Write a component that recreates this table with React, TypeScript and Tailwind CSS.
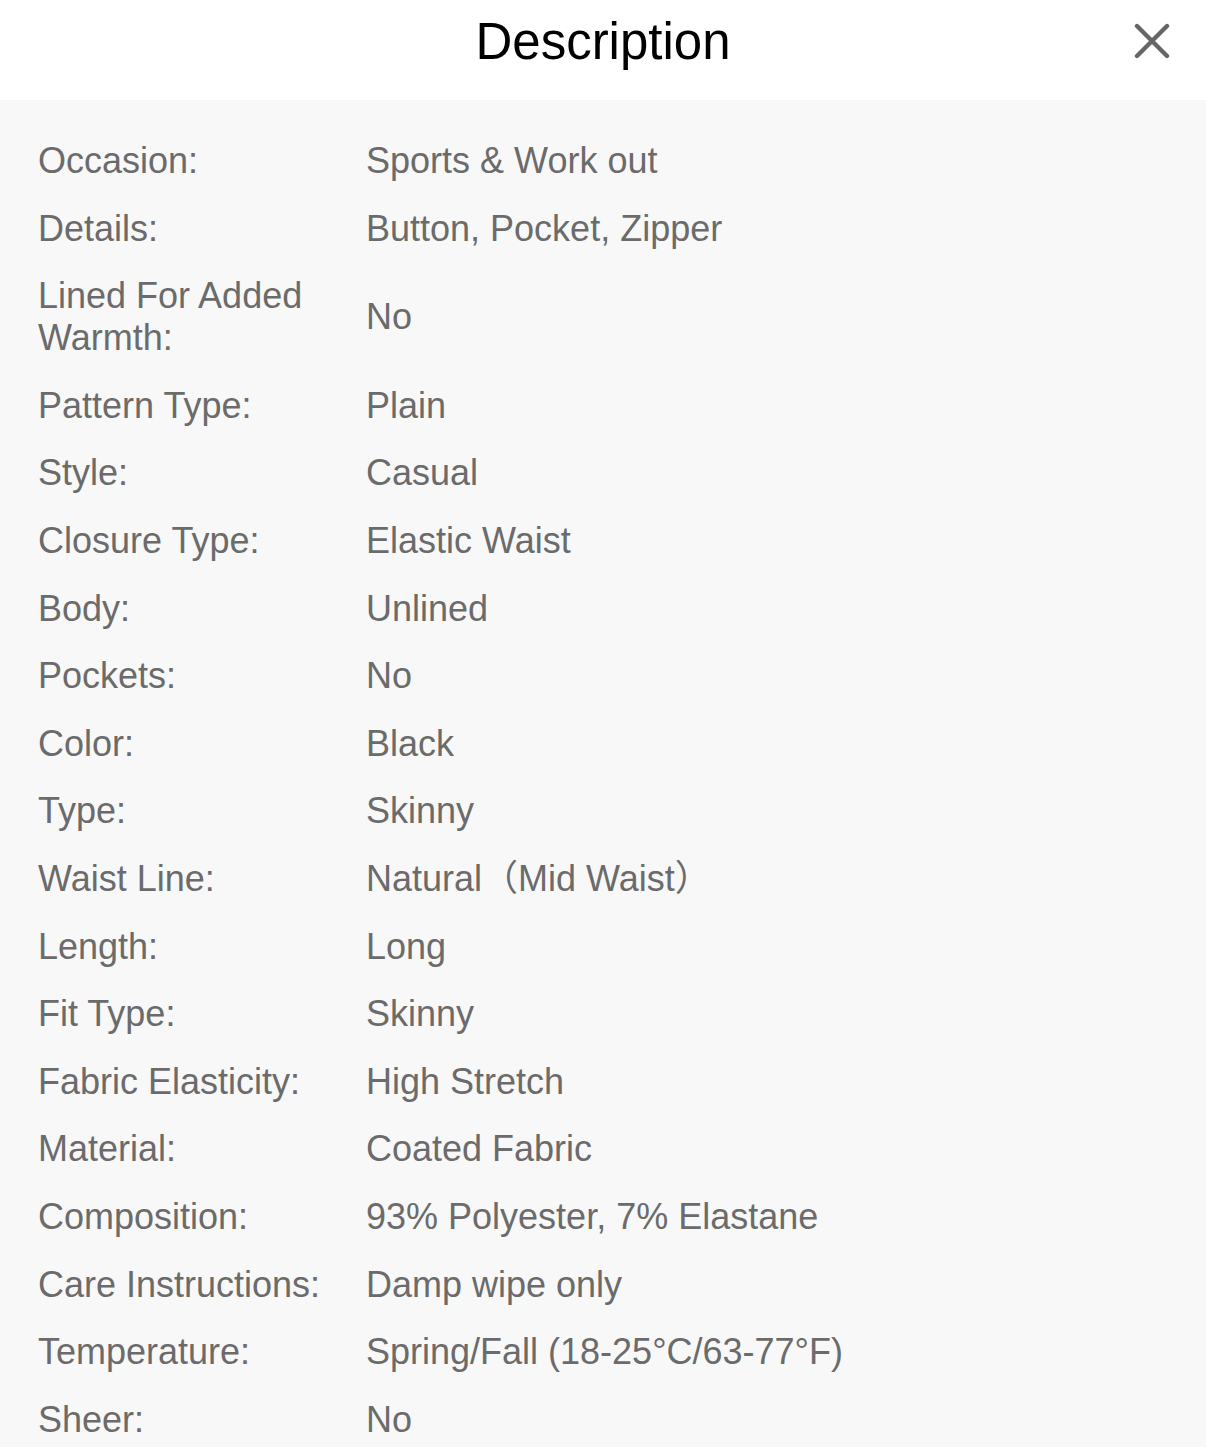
import React from 'react';

const specs: [string, string][] = [
  ['Occasion:', 'Sports & Work out'],
  ['Details:', 'Button, Pocket, Zipper'],
  ['Lined For Added Warmth:', 'No'],
  ['Pattern Type:', 'Plain'],
  ['Style:', 'Casual'],
  ['Closure Type:', 'Elastic Waist'],
  ['Body:', 'Unlined'],
  ['Pockets:', 'No'],
  ['Color:', 'Black'],
  ['Type:', 'Skinny'],
  ['Waist Line:', 'Natural（Mid Waist）'],
  ['Length:', 'Long'],
  ['Fit Type:', 'Skinny'],
  ['Fabric Elasticity:', 'High Stretch'],
  ['Material:', 'Coated Fabric'],
  ['Composition:', '93% Polyester, 7% Elastane'],
  ['Care Instructions:', 'Damp wipe only'],
  ['Temperature:', 'Spring/Fall (18-25°C/63-77°F)'],
  ['Sheer:', 'No'],
];

export default function App() {
  return (
    <div className="min-h-screen w-[1206px] bg-[#f8f8f8] font-['Liberation_Sans','Noto_Sans_CJK_SC',sans-serif]">
      <header className="relative flex h-[100px] items-center justify-center bg-white">
        <h1 className="-mt-[18px] text-[51px] leading-none text-black">Description</h1>
        <button className="absolute right-[36px] top-[23px] flex h-[36px] w-[36px] items-center justify-center">
          <svg className="h-[36px] w-[36px]" viewBox="0 0 36 36" fill="none" stroke="#666666" strokeWidth={4.4} strokeLinecap="round">
            <path d="M3 3l30 30M33 3L3 33" />
          </svg>
        </button>
      </header>

      <div className="flex flex-col gap-[25.6px] pt-[40px] pl-[38px] text-[36px] leading-[42px] text-[#6b6b6b]">
        {specs.map(([label, value]) => (
          <div key={label} className="flex items-center">
            <div className="w-[328px] shrink-0 pr-[20px]">{label}</div>
            <div>{value}</div>
          </div>
        ))}
      </div>
    </div>
  );
}
